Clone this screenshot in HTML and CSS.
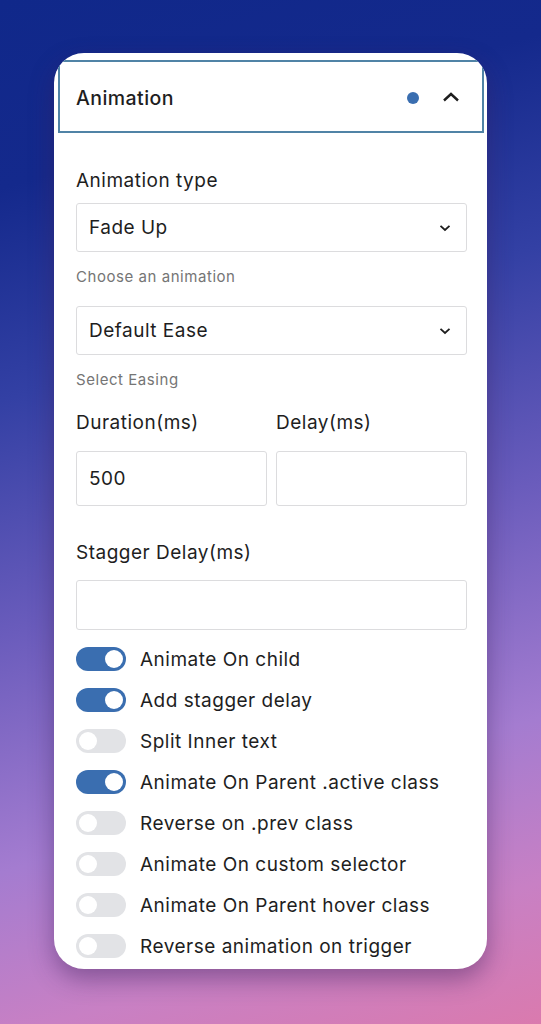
FILE: index.html
```html
<!DOCTYPE html>
<html>
<head>
<meta charset="utf-8">
<link rel="stylesheet" href="styles.css">
</head>
<body>
<div class="card">
  <div class="panel-header">
    <span class="panel-title">Animation</span>
    <span class="dot"></span>
    <svg class="chev-up" width="18" height="12" viewBox="0 0 18 12"><path d="M2 9.5 L9 3 L16 9.5" fill="none" stroke="#1e1e1e" stroke-width="2.4"/></svg>
  </div>
  <div class="panel-body">
    <div class="label first">Animation type</div>
    <div class="select"><span>Fade Up</span><svg width="12" height="8" viewBox="0 0 12 8"><path d="M1.5 1.8 L6 6 L10.5 1.8" fill="none" stroke="#1e1e1e" stroke-width="1.8"/></svg></div>
    <div class="help">Choose an animation</div>
    <div class="select second"><span>Default Ease</span><svg width="12" height="8" viewBox="0 0 12 8"><path d="M1.5 1.8 L6 6 L10.5 1.8" fill="none" stroke="#1e1e1e" stroke-width="1.8"/></svg></div>
    <div class="help">Select Easing</div>
    <div class="two-col">
      <div class="col">
        <div class="label">Duration(ms)</div>
        <div class="input tall">500</div>
      </div>
      <div class="col">
        <div class="label">Delay(ms)</div>
        <div class="input tall"></div>
      </div>
    </div>
    <div class="label stagger">Stagger Delay(ms)</div>
    <div class="input"></div>
    <div class="toggles">
      <div class="toggle-row"><span class="toggle on"></span><span>Animate On child</span></div>
      <div class="toggle-row"><span class="toggle on"></span><span>Add stagger delay</span></div>
      <div class="toggle-row"><span class="toggle"></span><span>Split Inner text</span></div>
      <div class="toggle-row"><span class="toggle on"></span><span>Animate On Parent .active class</span></div>
      <div class="toggle-row"><span class="toggle"></span><span>Reverse on .prev class</span></div>
      <div class="toggle-row"><span class="toggle"></span><span>Animate On custom selector</span></div>
      <div class="toggle-row"><span class="toggle"></span><span>Animate On Parent hover class</span></div>
      <div class="toggle-row"><span class="toggle"></span><span>Reverse animation on trigger</span></div>
    </div>
  </div>
</div>
</body>
</html>
```

FILE: styles.css
```css
html, body {
  margin: 0;
  height: 1024px;
}
body {
  padding: 53px 54px 0 54px;
  box-sizing: border-box;
  font-family: "Inter", "Noto Sans", sans-serif;
  color: #1e1e1e;
  background: linear-gradient(164deg, #10288a 0%, #14298c 16%, #3340a4 34%, #6a5cbc 54%, #a47cd0 74%, #c880c4 88%, #da7aae 100%);
  overflow: hidden;
}
.card {
  width: 433px;
  height: 916px;
  background: #fff;
  border-radius: 30px;
  overflow: hidden;
  box-shadow: 0 10px 24px rgba(60, 30, 90, 0.45);
}
.panel-header {
  margin: 7px 3px 0 4px;
  height: 73px;
  border: 2px solid #5083a6;
  box-sizing: border-box;
  display: flex;
  align-items: center;
  padding: 0 22px 0 16px;
}
.panel-title {
  flex: 1;
  font-size: 19.5px;
  font-weight: 500;
  letter-spacing: 0.45px;
  margin-top: 2px;
}
.dot {
  width: 12px;
  height: 12px;
  border-radius: 50%;
  background: #3a6eb0;
  margin-right: 23px;
  margin-top: 2px;
}
.chev-up {
  display: block;
}
.panel-body {
  padding: 0 20px 0 22px;
}
.label {
  font-size: 19px;
  line-height: 24px;
  letter-spacing: 0.5px;
}
.label.first {
  margin-top: 36px;
  margin-bottom: 10px;
}
.select {
  height: 49px;
  border: 1px solid #dcdcde;
  border-radius: 3px;
  box-sizing: border-box;
  display: flex;
  align-items: center;
  justify-content: space-between;
  padding: 0 15px 0 12px;
  font-size: 19px;
  letter-spacing: 0.5px;
}
.select.second {
  margin-top: 19px;
}
.help {
  font-size: 15px;
  line-height: 20px;
  color: #757575;
  margin-top: 15px;
  letter-spacing: 0.55px;
}
.two-col {
  display: flex;
  gap: 9px;
  margin-top: 21px;
}
.col {
  flex: 1;
}
.col .label {
  margin-bottom: 16px;
}
.input {
  height: 50px;
  border: 1px solid #dcdcde;
  border-radius: 3px;
  box-sizing: border-box;
  display: flex;
  align-items: center;
  padding-left: 12px;
  font-size: 19px;
  letter-spacing: 0.5px;
}
.input.tall {
  height: 55px;
}
.label.stagger {
  margin-top: 35px;
  margin-bottom: 15px;
}
.toggles {
  margin-top: 17px;
  display: flex;
  flex-direction: column;
  gap: 17px;
}
.toggle-row {
  display: flex;
  align-items: center;
  height: 24px;
  font-size: 19px;
  letter-spacing: 0.5px;
}
.toggle {
  position: relative;
  width: 50px;
  height: 24px;
  border-radius: 12px;
  background: #e2e3e6;
  margin-right: 14px;
  flex-shrink: 0;
}
.toggle::after {
  content: "";
  position: absolute;
  top: 3px;
  left: 3px;
  width: 18px;
  height: 18px;
  border-radius: 50%;
  background: #fff;
}
.toggle.on {
  background: #3a6eb0;
}
.toggle.on::after {
  left: 29px;
}
```
